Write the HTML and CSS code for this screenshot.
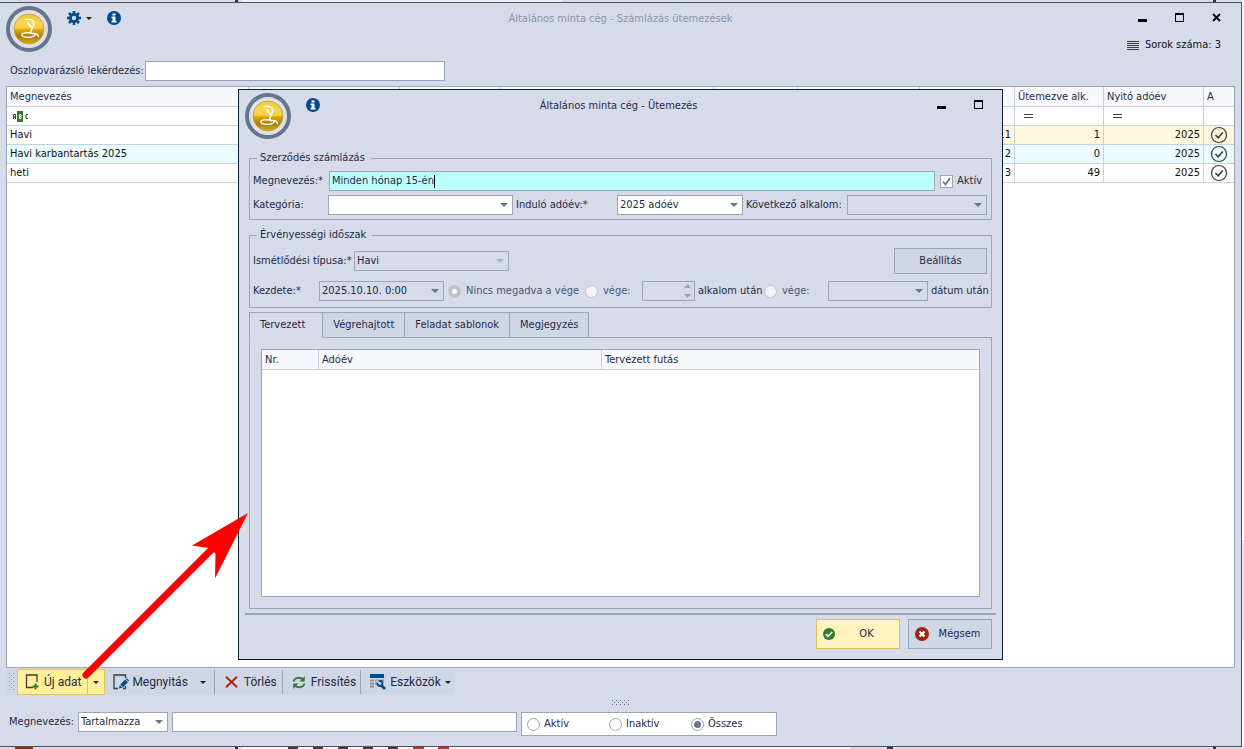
FILE: index.html
```html
<!DOCTYPE html>
<html lang="hu">
<head>
<meta charset="utf-8">
<title>Általános minta cég - Számlázás ütemezések</title>
<link rel="stylesheet" href="styles.css">
</head>
<body>
<svg class="defs" aria-hidden="true">
  <defs>
    <linearGradient id="gold" x1="0" y1="0" x2="0" y2="1">
      <stop offset="0" stop-color="#f0c52c"/><stop offset=".3" stop-color="#f7d75a"/>
      <stop offset=".48" stop-color="#f3cd3c"/><stop offset=".53" stop-color="#dba90a"/>
      <stop offset=".75" stop-color="#a87c06"/><stop offset="1" stop-color="#d9ab10"/>
    </linearGradient>
    <symbol id="logo" viewBox="0 0 46 46">
      <circle cx="23" cy="23" r="21" fill="#dfe1e6" stroke="#65758f" stroke-width="4"/>
      <circle cx="23" cy="23" r="15" fill="url(#gold)" stroke="#c9a544"/>
      <path d="M19 13.500c4-.5 7.500 0 8.500 2.500 .7 2 .2 3.500-1 5.500-2.500-1-4-2.500-4.500-5M26.500 21.500c-.5 2.500-2.500 3.500-1.500 5.500M29 28.500c0 1.500-3 2.700-6.500 2.700s-6.700-.9-6.700-2.300 2.700-2.100 6-2.100 4.500.6 4.500 1.300M26.500 27.500c3-.3 5.500.5 6 3" fill="none" stroke="#fff" stroke-width="1.400" stroke-linecap="round"/>
    </symbol>
    <symbol id="info" viewBox="0 0 14 14">
      <circle cx="7" cy="7" r="7" fill="#004a8d"/>
      <path d="M5.500 2.500h3v2h-3zM4.500 5.500h4v4.500h1V11.500h-5V10h1V7h-1z" fill="#fff"/>
    </symbol>
    <symbol id="done" viewBox="0 0 18 18">
      <circle cx="9" cy="9" r="7.500" fill="none" stroke="#3c3c3c" stroke-width="1.200"/>
      <path d="M5.500 9l2.700 2.800L12.800 6.500" fill="none" stroke="#3c3c3c" stroke-width="1.600"/>
    </symbol>
    <symbol id="min" viewBox="0 0 9 10"><path d="M0 6h9v3H0z"/></symbol>
    <symbol id="max" viewBox="0 0 9 10"><path d="M0 0h9v9H0zM1 2v6h7V2z" fill-rule="evenodd"/></symbol>
  </defs>
</svg>
<div class="behind behind-top"></div>
<main class="window">
  <header class="titlebar">
    <div class="tools">
      <svg class="logo"><use href="#logo"/></svg>
      <button class="flat gear" aria-label="Beállítások">
        <svg width="14" height="14" viewBox="0 0 14 14"><path d="M7 0v14M0 7h14M2 2l10 10M12 2L2 12" stroke="#004a8d" stroke-width="2.600"/><circle cx="7" cy="7" r="3.600" fill="#d5dbe9" stroke="#004a8d" stroke-width="2.800"/></svg>
        <i class="caret"></i>
      </button>
      <button class="flat" aria-label="Információ"><svg class="info"><use href="#info"/></svg></button>
    </div>
    <h1 class="title title-off">Általános minta cég - Számlázás ütemezések</h1>
    <div class="side">
      <div class="controls">
        <button class="flat" aria-label="Kis méret"><svg width="9" height="10"><use href="#min"/></svg></button>
        <button class="flat" aria-label="Teljes méret"><svg width="9" height="10"><use href="#max"/></svg></button>
        <button class="flat" aria-label="Bezárás"><svg width="9" height="10" viewBox="0 0 9 10"><path d="M1 1l7 7M8 1L1 8" stroke="#000" stroke-width="1.800"/></svg></button>
      </div>
      <p class="count"><svg width="12" height="9" viewBox="0 0 12 9"><path d="M0 .5h12M0 2.500h12M0 4.500h12M0 6.500h12M0 8.500h12" stroke="#3c3c3c"/></svg>Sorok száma: 3</p>
    </div>
  </header>
  <div class="wizard"><label for="wizard">Oszlopvarázsló lekérdezés:</label><input class="box wizard-input" id="wizard" type="text"></div>

  <div class="grid-frame">
    <table class="grid">
      <colgroup><col class="c-name"><col class="c-b"><col class="c-c"><col class="c-wide"><col class="c-e"><col class="c-f"><col class="c-g"><col class="c-h"><col class="c-i"><col class="c-j"></colgroup>
      <thead>
        <tr><th>Megnevezés</th><th></th><th></th><th></th><th></th><th></th><th></th><th>Ütemezve alk.</th><th>Nyitó adóév</th><th>A</th></tr>
      </thead>
      <tbody>
        <tr><td><svg class="abc" width="17" height="11" viewBox="0 0 17 11"><path d="M5 0h6v11H5z" fill="#2f7d32"/><path d="M1.500 8V3.500h2V8M1.500 6h2M16 3.500h-2v4h2" fill="none" stroke="#3c3c3c"/><path d="M7.500 3.500h1.500v4H7.500zM7.500 5.500H9" fill="none" stroke="#fff"/></svg></td><td></td><td></td><td></td><td></td><td></td><td></td><td><i class="equals"></i></td><td><i class="equals"></i></td><td></td></tr>
        <tr class="selected"><td class="focus">Havi</td><td></td><td></td><td></td><td></td><td></td><td class="num">11</td><td class="num">1</td><td class="num">2025</td><td class="mark"><svg class="done"><use href="#done"/></svg></td></tr>
        <tr class="even"><td>Havi karbantartás 2025</td><td></td><td></td><td></td><td></td><td></td><td class="num">2</td><td class="num">0</td><td class="num">2025</td><td class="mark"><svg class="done"><use href="#done"/></svg></td></tr>
        <tr><td>heti</td><td></td><td></td><td></td><td></td><td></td><td class="num">3</td><td class="num">49</td><td class="num">2025</td><td class="mark"><svg class="done"><use href="#done"/></svg></td></tr>
      </tbody>
    </table>
  </div>

  <nav class="toolbar">
    <svg class="grip" width="6" height="20" viewBox="0 0 6 20"><path d="M0 1.500h6M0 5.500h6M0 9.500h6M0 13.500h6M0 17.500h6" stroke="#7c859a" stroke-dasharray="1 3"/><path d="M2 3.500h4M2 7.500h4M2 11.500h4M2 15.500h4" stroke="#7c859a" stroke-dasharray="1 3"/></svg>
    <div class="new"><button class="tool"><svg width="15" height="16" viewBox="0 0 15 16"><path d="M12 8V1H1.500v12.500H8" fill="none" stroke="#3c3c3c" stroke-width="1.300"/><path d="M10.500 9.500v6M7.500 12.500h6" stroke="#2f7d32" stroke-width="2"/></svg>Új adat</button><button class="tool drop" aria-label="Új adat menü"><i class="caret"></i></button></div>
    <button class="tool open"><svg width="16" height="16" viewBox="0 0 16 16"><path d="M12.500 4V1H1v13.500h4M12.500 12v2.500H10" fill="none" stroke="#3c3c3c" stroke-width="1.300"/><path d="M6 14.500l.8-3.400 2.600 2.600zM7.300 10.600l5-5 2.600 2.600-5 5zM12.900 5l.9-.9 2.200 2.300-.6 1.200z" fill="#004a8d"/></svg>Megnyitás</button>
    <button class="tool open-drop" aria-label="Megnyitás menü"><i class="caret"></i></button>
    <button class="tool ruled delete"><svg width="13" height="12" viewBox="0 0 13 12"><path d="M1 .8l11 10.500M12 .8L1 11.300" stroke="#a82a10" stroke-width="2"/></svg>Törlés</button>
    <button class="tool ruled refresh"><svg width="14" height="13" viewBox="0 0 14 13"><path d="M1.500 5.500C2.500 1.500 8 .5 11 3.500M12.500 7.500C11.500 11.500 6 12.500 3 9.500" fill="none" stroke="#2f7d32" stroke-width="1.800"/><path d="M12.800 0v5.500H7.500zM1.200 13V7.500h5.300z" fill="#2f7d32"/></svg>Frissítés</button>
    <button class="tool ruled extras"><svg width="16" height="16" viewBox="0 0 16 16"><path d="M0 0h14v4H0z" fill="#004a8d"/><path d="M0 5.500h4v2H0zM5 5.500h4v2H5zM10 5.500h4v2h-4zM0 8.500h4v2H0zM5 8.500h2v2H5zM0 11.500h4v2H0z" fill="#8d929d"/><path d="M11 11l4 4" stroke="#004a8d" stroke-width="2.600"/><circle cx="10" cy="9.500" r="2.400" fill="none" stroke="#004a8d" stroke-width="2"/><path d="M6.500 6.500l3.300 3" stroke="#cfd6e6" stroke-width="1.800"/></svg>Eszközök<i class="caret"></i></button>
  </nav>
  <div class="splitter"><svg width="18" height="5" viewBox="0 0 18 5"><path d="M0 .5h18M0 4.500h18" stroke="#66718a" stroke-dasharray="1 3"/><path d="M2 2.500h16" stroke="#66718a" stroke-dasharray="1 3"/></svg></div>
  <form class="filter">
    <label for="mode">Megnevezés:</label>
    <span class="select mode"><select id="mode"><option>Tartalmazza</option></select></span>
    <input class="box filter-text" type="text" aria-label="Megnevezés szűrő">
    <div class="box states">
      <label><input type="radio" name="state">Aktív</label>
      <label><input type="radio" name="state">Inaktív</label>
      <label><input type="radio" name="state" checked>Összes</label>
    </div>
  </form>
</main>
<div class="behind behind-bottom"></div>

<section class="dialog" role="dialog" aria-labelledby="dialog-title">
  <header class="titlebar">
    <div class="tools">
      <svg class="logo"><use href="#logo"/></svg>
      <button class="flat" aria-label="Információ"><svg class="info"><use href="#info"/></svg></button>
    </div>
    <h2 class="title" id="dialog-title">Általános minta cég - Ütemezés</h2>
    <div class="side">
      <div class="controls">
        <button class="flat" aria-label="Kis méret"><svg width="9" height="10"><use href="#min"/></svg></button>
        <button class="flat" aria-label="Teljes méret"><svg width="9" height="10"><use href="#max"/></svg></button>
      </div>
    </div>
  </header>
  <fieldset class="group">
    <legend>Szerződés számlázás</legend>
    <div class="row">
      <label class="l-name" for="name">Megnevezés:*</label>
      <div class="box active"><input id="name" type="text" value="Minden hónap 15-én" size="1"><i class="cursor"></i></div>
      <label class="check"><input type="checkbox" checked>Aktív</label>
    </div>
    <div class="row">
      <label class="l-name" for="cat">Kategória:</label>
      <span class="select grow"><select id="cat"><option></option></select></span>
      <label class="l-mid" for="year">Induló adóév:*</label>
      <span class="select s-year"><select id="year"><option>2025 adóév</option></select></span>
      <label class="l-mid" for="next">Következő alkalom:</label>
      <span class="select off s-next"><select id="next" disabled><option></option></select></span>
    </div>
  </fieldset>
  <fieldset class="group validity">
    <legend>Érvényességi időszak</legend>
    <div class="row">
      <label class="l-type" for="type">Ismétlődési típusa:*</label>
      <span class="select off faint s-type"><select id="type" disabled><option>Havi</option></select></span>
      <button class="button setup">Beállítás</button>
    </div>
    <div class="row ends">
      <label class="l-start" for="start">Kezdete:*</label>
      <span class="select off s-start"><select id="start"><option>2025.10.10. 0:00</option></select></span>
      <label class="end end-none"><input type="radio" name="end" checked disabled>Nincs megadva a vége</label>
      <label class="end end-count"><input type="radio" name="end" disabled>vége:</label>
      <span class="box off spin"><input id="times" type="text" size="1" disabled><svg width="7" height="14" viewBox="0 0 7 14"><path d="M0 4l3.500-4L7 4zM0 10h7l-3.500 4z" fill="#9ba5b7"/></svg></span>
      <label class="l-times" for="times">alkalom után</label>
      <label class="end end-date"><input type="radio" name="end" disabled>vége:</label>
      <span class="select off grow"><select id="until" disabled><option></option></select></span>
      <label class="l-until" for="until">dátum után</label>
    </div>
  </fieldset>
  <div class="tabs" role="tablist">
    <button class="tab current" role="tab" aria-selected="true">Tervezett</button>
    <button class="tab" role="tab">Végrehajtott</button>
    <button class="tab" role="tab">Feladat sablonok</button>
    <button class="tab" role="tab">Megjegyzés</button>
    <i class="tab-rest"></i>
  </div>
  <div class="panel" role="tabpanel">
    <div class="grid-frame">
      <table class="grid plan">
        <colgroup><col class="p-nr"><col class="p-year"><col></colgroup>
        <thead><tr><th>Nr.</th><th>Adóév</th><th>Tervezett futás</th></tr></thead>
      </table>
    </div>
  </div>
  <footer class="actions">
    <button class="button ok"><svg width="12" height="12" viewBox="0 0 12 12"><circle cx="6" cy="6" r="6" fill="#2f7d32"/><path d="M2.800 6l2.300 2.300L9.200 4" fill="none" stroke="#fff" stroke-width="1.700"/></svg><span>OK</span></button>
    <button class="button cancel"><svg width="14" height="14" viewBox="0 0 14 14"><circle cx="7" cy="7" r="7" fill="#a02510"/><path d="M4.500 4.500l5 5M9.500 4.500l-5 5" stroke="#fff" stroke-width="2.400"/></svg><span>Mégsem</span></button>
  </footer>
</section>
<svg class="arrow" width="170" height="170" viewBox="0 0 170 170" aria-hidden="true"><path d="M6 164L132 38" stroke="#f00" stroke-width="7" stroke-linecap="round"/><path d="M168 2L112 34.500l16.500 2.500 7 5.500-.5 25z" fill="#f00"/></svg>
</body>
</html>
```
FILE: styles.css
```css
:root {
  --face: #d5dbe9;
  --button: #cfd6e6;
  --line: #9ba5b7;
  --cell: #cbcedb;
  --text: #1f2a44;
}
* { box-sizing: border-box; }
body {
  margin: 0;
  height: 100vh;
  display: flex;
  flex-direction: column;
  position: relative;
  overflow: hidden;
  padding-right: 2px;
  background: linear-gradient(#f4f5f8 0 320px, #fff 320px 540px, #ececee 540px 640px, #fff 640px);
  font: 11px/14px "DejaVu Sans Condensed", "Noto Sans", sans-serif;
  color: var(--text);
}
button, input, select { font: inherit; color: inherit; margin: 0; }
h1, h2, p { margin: 0; font: inherit; }
svg { display: block; flex: none; }
.defs { position: absolute; width: 0; height: 0; }

.behind { height: 2px; flex: none; }
.behind-top { background: linear-gradient(90deg, var(--face) 0 235px, #2a3555 235px 238px, var(--face) 238px 242px, #eef0f5 242px 562px, var(--face) 562px 1213px, #2a3555 1213px 1216px, var(--face) 1216px); }
.behind-bottom { background: linear-gradient(90deg, var(--face) 0 15px, #a02510 15px 33px, var(--face) 33px 235px, #2a3555 235px 238px, var(--face) 238px 242px, #f7f8fa 242px 288px, #3c3c46 288px 298px, #f7f8fa 298px 313px, #3c3c46 313px 323px, #f7f8fa 323px 338px, #3c3c46 338px 348px, #f7f8fa 348px 363px, #3c3c46 363px 373px, #f7f8fa 373px 388px, #3c3c46 388px 398px, #f7f8fa 398px 413px, #c03030 413px 424px, #f7f8fa 424px 438px, #c03030 438px 449px, #f7f8fa 449px 850px, var(--face) 850px 887px, #2a3555 887px 893px, var(--face) 893px 1213px, #2a3555 1213px 1216px, var(--face) 1216px); }

.window {
  flex: 1;
  min-height: 0;
  display: flex;
  flex-direction: column;
  background: var(--face);
  border: solid #50525a;
  border-width: 1px 1px 1px 0;
  padding: 3px 6px 10px;
}
.titlebar { display: grid; grid-template-columns: 1fr auto 1fr; align-items: start; }
.tools { display: flex; align-items: flex-start; }
.logo { width: 46px; height: 46px; }
.flat { border: 0; padding: 0; background: none; display: flex; align-items: center; }
.tools .flat { margin: 5px 0 0 15px; }
.tools .gear { gap: 5px; }
.info { width: 14px; height: 14px; }
.caret { border: solid transparent; border-width: 3px 3px 0; border-top-color: #1c2233; }
.title { padding-top: 6px; }
.title-off { color: #8b94a8; }
.side { display: flex; flex-direction: column; align-items: flex-end; gap: 15px; padding: 7px 14px 0 0; }
.controls { display: flex; gap: 28px; }
.count { display: flex; align-items: center; gap: 6px; color: #111; }

.wizard { display: flex; align-items: center; gap: 1px; padding: 9px 0 5px 4px; }
.box { background: #fff; border: 1px solid var(--line); height: 20px; padding: 0 3px; border-radius: 0; outline: 0; }
.wizard-input { width: 300px; }

.grid-frame { flex: 1; min-height: 0; background: #fff; border: 1px solid var(--line); overflow: hidden; }
.grid { width: 100%; table-layout: fixed; border-collapse: separate; border-spacing: 0; color: #111; }
.grid th, .grid td { height: 19px; padding: 0 3px; border: solid var(--cell); border-width: 0 1px 1px 0; font-weight: normal; text-align: left; white-space: nowrap; overflow: hidden; }
.grid th { height: 20px; background: #f7f9fd; color: var(--text); }
.grid th:last-child, .grid td:last-child { border-right: 0; }
.grid .num { text-align: right; }
.grid .mark { padding: 0 6px; }
.c-name { width: 242px; } .c-b { width: 151px; } .c-c { width: 101px; }
.c-e { width: 84px; } .c-f { width: 122px; } .c-g { width: 95px; }
.c-h { width: 89px; } .c-i { width: 100px; } .c-j { width: 30px; }
.selected { background: #fff7de; }
.focus { background: #fff; }
.even { background: #ebfcff; }
.done { width: 18px; height: 18px; }
.abc { margin-left: 2px; }
.equals { display: block; width: 9px; height: 4px; margin-left: 6px; border: solid #3c3c3c; border-width: 1px 0; }

.toolbar { display: flex; align-items: stretch; align-self: flex-start; height: 26px; margin-top: 1px; padding: 1px 0; background: var(--button); font: 12px/16px Roboto, "Noto Sans", sans-serif; }
.grip { margin: 2px 2px 0 3px; opacity: .7; }
.tool { display: flex; align-items: center; gap: 6px; border: 0; padding: 0 8px; background: none; white-space: nowrap; }
.new { display: flex; background: #fff099; border: 1px solid #e2bf62; margin: -1px 0; }
.new .tool { padding: 0 6px 0 7px; gap: 4px; }
.new .drop { border-left: 1px solid #e2bf62; padding: 0 5px; }
.open { gap: 3px; }
.open-drop { padding: 0 8px 0 4px; }
.ruled { border-left: 1px solid var(--line); }
.delete { padding: 0 5px 0 10px; }
.refresh, .extras { padding: 0 4px 0 9px; }
.refresh { gap: 5px; }
.extras { gap: 4px; }

.splitter { display: flex; justify-content: center; padding: 5px 0 7px; }
.filter { display: flex; align-items: flex-start; gap: 4px; padding-left: 3px; margin-right: 458px; }
.filter > label { line-height: 20px; }
.mode { width: 90px; }
.filter-text { flex: 1; min-width: 0; }
.states { display: flex; width: 256px; height: 24px; padding: 0 5px; }
.states label { flex: none; width: 82px; display: flex; align-items: center; gap: 4px; }

input[type="radio"] { appearance: none; flex: none; width: 13px; height: 13px; border: 1px solid var(--line); border-radius: 50%; background: #fff; }
input[type="radio"]:checked { background: radial-gradient(circle, #66748f 0 3px, #fff 4px); }
input[type="radio"]:disabled { border-color: #c2c2c2; background: #f4f4f4; }
input[type="radio"]:disabled:checked { background: radial-gradient(circle, #fff 0 2px, #c2c2c2 3px); }

.select { position: relative; flex: none; display: block; height: 20px; background: #fff; border: 1px solid var(--line); }
.select::after { content: ""; position: absolute; right: 4px; top: 7px; border: solid transparent; border-width: 4px 4px 0; border-top-color: #66748f; pointer-events: none; }
.select select { appearance: none; display: block; width: 100%; height: 100%; border: 0; padding: 0 2px; background: none; opacity: 1; outline: 0; }
.off { background: var(--face); }
.faint::after { border-top-color: #a9b1c2; }
.grow { flex: 1; min-width: 0; }

.dialog {
  position: absolute;
  left: 238px;
  top: 89px;
  width: 765px;
  height: 571px;
  display: flex;
  flex-direction: column;
  padding: 3px 10px 10px;
  background: var(--face);
  border: 1px solid #0c1f30;
}
.dialog .titlebar { margin: 0 0 12px -4px; }
.dialog .side { padding-right: 9px; }
.group { position: relative; border: 1px solid var(--line); margin: 0; padding: 6px 4px 4px 3px; min-width: 0; }
.group legend { margin-left: 4px; padding: 0 6px 0 3px; }
.group + .group { margin-top: 8px; padding-bottom: 6px; }
.row { display: flex; align-items: center; }
.row + .row { margin-top: 4px; }
.row label { flex: none; white-space: nowrap; }
.l-name { width: 75px; }
.l-mid { width: 104px; padding-left: 3px; }
.s-year { width: 126px; }
.s-next { width: 140px; }
.active { flex: 1; display: flex; align-items: center; background: #bbffff; margin-left: 1px; padding: 0 2px; }
.active input { field-sizing: content; border: 0; padding: 0; background: none; outline: 0; }
.cursor { width: 1px; height: 13px; background: #000; }
.check { display: flex; align-items: center; gap: 4px; width: 52px; padding-left: 5px; }
.check input { appearance: none; width: 13px; height: 13px; border: 1px solid var(--line); background: #fff url("data:image/svg+xml,%3Csvg xmlns='http://www.w3.org/2000/svg' viewBox='0 0 11 11'%3E%3Cpath d='M2 5.500l2.500 3L9 2' fill='none' stroke='%2366748f' stroke-width='1.800'/%3E%3C/svg%3E") center / 11px 11px no-repeat; }
.validity .row + .row { margin-top: 7px; }
.l-type { width: 101px; }
.s-type { width: 155px; }
.button { display: flex; align-items: center; justify-content: center; padding: 0; background: var(--button); border: 1px solid var(--line); }
.setup { width: 93px; height: 26px; margin-left: auto; }
.l-start { width: 66px; }
.s-start { width: 125px; }
.end { display: flex; align-items: center; gap: 5px; padding-left: 4px; color: #4a5674; }
.end-none { width: 137px; }
.end-count { width: 61px; }
.end-date { width: 68px; }
.spin { flex: none; display: flex; align-items: center; width: 53px; }
.spin input { flex: 1; min-width: 0; border: 0; background: none; padding: 0; }
.l-times { width: 65px; padding-left: 3px; }
.l-until { width: 59px; padding-left: 3px; }

.tabs { display: flex; margin-top: 4px; }
.tab { height: 26px; padding: 0 10px; background: var(--button); border: 1px solid var(--line); border-left-width: 0; white-space: nowrap; }
.tab + .tab { border-left-width: 1px; margin-right: -1px; }
.current { padding-right: 17px; background: var(--face); border-left-width: 1px; border-bottom-color: transparent; border-right: 0; }
.tab-rest { flex: 1; border-bottom: 1px solid var(--line); }
.panel { flex: 1; min-height: 0; display: flex; border: 1px solid var(--line); border-top: 0; padding: 11px; }
.plan th:last-child { border-right: 0; }
.p-nr { width: 57px; }
.p-year { width: 283px; }
.actions { display: flex; justify-content: flex-end; gap: 8px; border-top: 2px solid var(--line); margin: 4px -4px 0; padding: 4px 4px 0; }
.actions .button { width: 84px; height: 30px; padding: 0 6px; justify-content: flex-start; }
.actions span { flex: 1; padding-left: 5px; text-align: center; }
.actions .ok { background: #fff3bf; border-color: #e5c056; }

.arrow { position: absolute; left: 80px; top: 511px; pointer-events: none; }
```
